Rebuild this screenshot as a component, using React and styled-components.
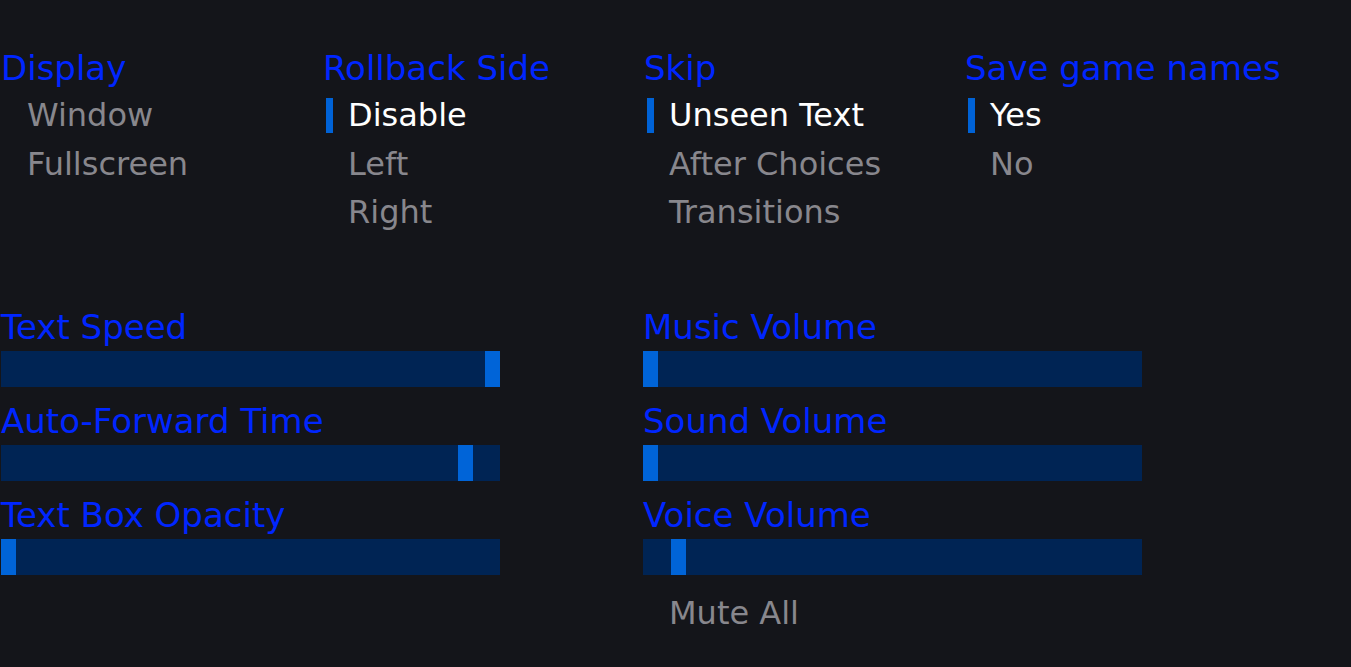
import React from "react";
import styled, { createGlobalStyle } from "styled-components";

const GlobalStyle = createGlobalStyle`
  html, body {
    margin: 0;
    padding: 0;
    background: #14151a;
  }
  body {
    font-family: "DejaVu Sans", "Liberation Sans", sans-serif;
    width: 1351px;
    height: 667px;
    overflow: hidden;
  }
`;

const Screen = styled.main`
  box-sizing: border-box;
  width: 1351px;
  height: 667px;
  padding: 47px 0 0 1px;
  background: #14151a;
`;

const ChoiceGrid = styled.section`
  display: grid;
  grid-template-columns: repeat(4, 321px);
`;

const SliderGrid = styled.section`
  display: grid;
  grid-template-columns: repeat(2, 642px);
  margin-top: 68px;
`;

const Column = styled.div`
  display: flex;
  flex-direction: column;
`;

const Label = styled.h2`
  margin: 0;
  font-size: 34px;
  font-weight: normal;
  line-height: 43px;
  height: 44px;
  color: #0026ff;
  white-space: nowrap;
  margin-left: ${(p) => (p.$first ? "0" : "1px")};
`;

const SliderLabel = styled(Label)`
  height: 44px;
  line-height: 45px;
  margin-left: 0;
`;

const Option = styled.div`
  display: flex;
  align-items: center;
  height: 48.5px;
  font-size: 32px;
  line-height: 48.5px;
  color: ${(p) => (p.$selected ? "#ffffff" : "#88878d")};
  white-space: nowrap;
`;

const Marker = styled.span`
  flex: none;
  width: 7px;
  height: 35px;
  margin-left: 4px;
  margin-right: 15px;
  background: ${(p) => (p.$on ? "#0062d6" : "transparent")};
`;

const SliderGroup = styled.div`
  display: flex;
  flex-direction: column;
  margin-bottom: 12px;
`;

const Track = styled.div`
  position: relative;
  width: 499px;
  height: 36px;
  margin-top: 2px;
  background: #002454;
`;

const Thumb = styled.div`
  position: absolute;
  top: 0;
  width: 15px;
  height: 36px;
  background: #0064d8;
`;

const MuteRow = styled(Option)`
  margin-top: 2px;
`;

function Choice({ title, options, selected, first }) {
  return (
    <Column>
      <Label $first={first}>{title}</Label>
      {options.map((o) => (
        <Option key={o} $selected={o === selected}>
          <Marker $on={o === selected} />
          {o}
        </Option>
      ))}
    </Column>
  );
}

function Slider({ title, value }) {
  return (
    <SliderGroup>
      <SliderLabel>{title}</SliderLabel>
      <Track>
        <Thumb style={{ left: `${value * (499 - 15)}px` }} />
      </Track>
    </SliderGroup>
  );
}

export default function App() {
  return (
    <>
      <GlobalStyle />
      <Screen>
        <ChoiceGrid>
          <Choice title="Display" options={["Window", "Fullscreen"]} selected={null} first />
          <Choice title="Rollback Side" options={["Disable", "Left", "Right"]} selected="Disable" />
          <Choice title="Skip" options={["Unseen Text", "After Choices", "Transitions"]} selected="Unseen Text" />
          <Choice title="Save game names" options={["Yes", "No"]} selected="Yes" />
        </ChoiceGrid>
        <SliderGrid>
          <Column>
            <Slider title="Text Speed" value={1} />
            <Slider title="Auto-Forward Time" value={0.944} />
            <Slider title="Text Box Opacity" value={0} />
          </Column>
          <Column>
            <Slider title="Music Volume" value={0} />
            <Slider title="Sound Volume" value={0} />
            <Slider title="Voice Volume" value={0.058} />
            <MuteRow>
              <Marker />
              Mute All
            </MuteRow>
          </Column>
        </SliderGrid>
      </Screen>
    </>
  );
}
